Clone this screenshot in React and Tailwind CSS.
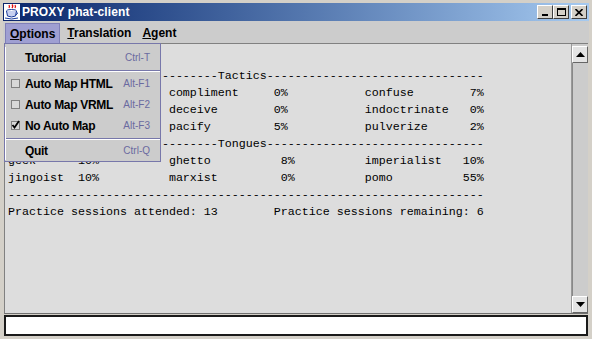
import React from "react";

const mono = { fontFamily: '"Liberation Mono", "DejaVu Sans Mono", monospace' };

function row(segs) {
  let s = "";
  for (const [c, t] of segs) s = s.padEnd(c) + t;
  return s;
}

const lines = [
  "",
  "-".repeat(30) + "Tactics" + "-".repeat(31),
  row([[0, "bribe"], [10, "0%"], [23, "compliment"], [38, "0%"], [51, "confuse"], [66, "7%"]]),
  row([[0, "cajole"], [10, "0%"], [23, "deceive"], [38, "0%"], [51, "indoctrinate"], [66, "0%"]]),
  row([[0, "flatter"], [10, "0%"], [23, "pacify"], [38, "5%"], [51, "pulverize"], [66, "2%"]]),
  "-".repeat(30) + "Tongues" + "-".repeat(31),
  row([[0, "geek"], [10, "10%"], [23, "ghetto"], [39, "8%"], [51, "imperialist"], [65, "10%"]]),
  row([[0, "jingoist"], [10, "10%"], [23, "marxist"], [39, "0%"], [51, "pomo"], [65, "55%"]]),
  "-".repeat(68),
  row([[0, "Practice sessions attended: 13"], [38, "Practice sessions remaining: 6"]]),
];

function WinBtn({ children, className = "" }) {
  return (
    <div
      className={`w-[16px] h-[14px] bg-[#d4d0c8] border border-t-white border-l-white border-r-[#404040] border-b-[#404040] flex items-center justify-center ${className}`}
    >
      {children}
    </div>
  );
}

function Check({ checked }) {
  return (
    <div className="w-[9px] h-[9px] border border-[#808080] bg-[#d8d8d8] relative flex items-center justify-center">
      {checked && (
        <svg width="9" height="9" viewBox="0 0 9 9" className="absolute left-[-1px] top-[-2px]">
          <path d="M1.5 5 L3.5 7.5 L8 1" stroke="#000" strokeWidth="1.8" fill="none" />
        </svg>
      )}
    </div>
  );
}

function MenuRow({ label, acc, check, checked, h = "h-[21px]" }) {
  return (
    <div className={`${h} flex items-center pr-[10px]`}>
      <div className="w-[19px] flex justify-start pl-[5px]">
        {check && <Check checked={checked} />}
      </div>
      <div className="text-[12px] font-bold text-black flex-1 tracking-[-0.3px]">{label}</div>
      <div className="text-[10px] text-[#6a6aa0]">{acc}</div>
    </div>
  );
}

function Sep() {
  return (
    <div className="h-[5px] flex flex-col justify-center">
      <div className="h-[1px] bg-[#7777aa]" />
      <div className="h-[1px] bg-white" />
    </div>
  );
}

export default function App() {
  return (
    <div
      className="w-[592px] h-[339px] bg-[#d4d0c8] flex flex-col p-[3px] pb-[3px] relative overflow-hidden"
      style={{ fontFamily: '"Liberation Sans", Arial, sans-serif' }}
    >
      {/* Title bar */}
      <div className="h-[18px] flex items-center bg-gradient-to-r from-[#0a246a] to-[#a6caf0] pl-[1px] pr-[2px] shrink-0">
        <svg width="16" height="16" viewBox="0 0 16 16" className="shrink-0">
          <rect x="0" y="0" width="16" height="16" fill="#ffffff" />
          <path d="M5 1 Q6 2.5 5 4 M8 0.5 Q9.5 2 8 4 M11 1 Q12 2.5 11 4" stroke="#e01010" strokeWidth="1.3" fill="none" />
          <ellipse cx="7.5" cy="7" rx="5" ry="1.5" fill="none" stroke="#1a3a9a" strokeWidth="1" />
          <path d="M2.5 7 L3.5 12 Q7.5 14 11.5 12 L12.5 7" fill="#c8d0f0" stroke="#1a3a9a" strokeWidth="1" />
          <path d="M12.5 8 Q15 8.5 12 11" stroke="#1a3a9a" strokeWidth="1" fill="none" />
          <path d="M1 14 Q7.5 16 14 14" stroke="#1a3a9a" strokeWidth="1" fill="none" />
        </svg>
        <div className="ml-[2px] text-white font-bold text-[12px] tracking-[0.1px]">PROXY phat-client</div>
        <div className="flex-1" />
        <WinBtn>
          <div className="w-[6px] h-[2px] bg-black mt-[6px]" />
        </WinBtn>
        <WinBtn>
          <div className="w-[9px] h-[8px] border border-black border-t-2" />
        </WinBtn>
        <WinBtn className="ml-[2px]">
          <svg width="8" height="7" viewBox="0 0 8 7">
            <path d="M0.5 0 L7.5 7 M7.5 0 L0.5 7" stroke="#000" strokeWidth="1.6" />
          </svg>
        </WinBtn>
      </div>

      {/* Menu bar */}
      <div className="h-[22px] bg-[#cccccc] flex items-end pl-[2px] shrink-0 text-[12px] font-bold text-black">
        <div className="h-[20px] px-[4px] flex items-center bg-[#9f9fd2] border-t border-l border-r border-[#8080b8]">
          <span><span className="underline">O</span>ptions</span>
        </div>
        <div className="h-[20px] pl-[7px] pr-[5px] flex items-center">
          <span><span className="underline">T</span>ranslation</span>
        </div>
        <div className="h-[20px] pl-[6px] pr-[5px] flex items-center">
          <span><span className="underline">A</span>gent</span>
        </div>
      </div>

      {/* Content */}
      <div className="flex-1 flex flex-col px-[1px]">
        <div className="flex-1 flex border-t border-l border-[#808080] border-b border-b-[#707070] bg-[#dddddd] min-h-0">
          <div className="flex-1 pl-[3px] pt-[7px] overflow-hidden">
            {lines.map((l, i) => (
              <div
                key={i}
                className="h-[17px] leading-[17px] text-[11.67px] text-black whitespace-pre"
                style={mono}
              >
                {l}
              </div>
            ))}
          </div>
          {/* Scrollbar */}
          <div className="w-[17px] bg-[#cccccc] border-l border-[#999999] flex flex-col pt-[2px]">
            <div className="h-[17px] bg-[#e4e4e4] border border-t-white border-l-white border-r-[#666666] border-b-[#666666] flex items-center justify-center">
              <svg width="9" height="5" viewBox="0 0 9 5">
                <path d="M0 5 L4.5 0 L9 5 Z" fill="#000" />
              </svg>
            </div>
            <div className="flex-1 border-l border-[#888888]" />
            <div className="h-[17px] bg-[#e4e4e4] border border-t-white border-l-white border-r-[#666666] border-b-[#666666] flex items-center justify-center">
              <svg width="9" height="5" viewBox="0 0 9 5">
                <path d="M0 0 L4.5 5 L9 0 Z" fill="#000" />
              </svg>
            </div>
          </div>
        </div>
        <div className="h-[21px] mt-[1px] bg-white border-2 border-[#1a1a1a] shrink-0" />
      </div>

      {/* Dropdown menu */}
      <div className="absolute left-[4px] top-[43px] w-[157px] bg-[#cccccc] border border-[#7777aa] pt-[3px] pb-[1px]">
        <div className="border-l border-white">
          <MenuRow label="Tutorial" acc="Ctrl-T" />
          <Sep />
          <MenuRow label="Auto Map HTML" acc="Alt-F1" check />
          <MenuRow label="Auto Map VRML" acc="Alt-F2" check />
          <MenuRow label="No Auto Map" acc="Alt-F3" check checked />
          <Sep />
          <MenuRow label="Quit" acc="Ctrl-Q" h="h-[19px]" />
        </div>
      </div>
    </div>
  );
}
